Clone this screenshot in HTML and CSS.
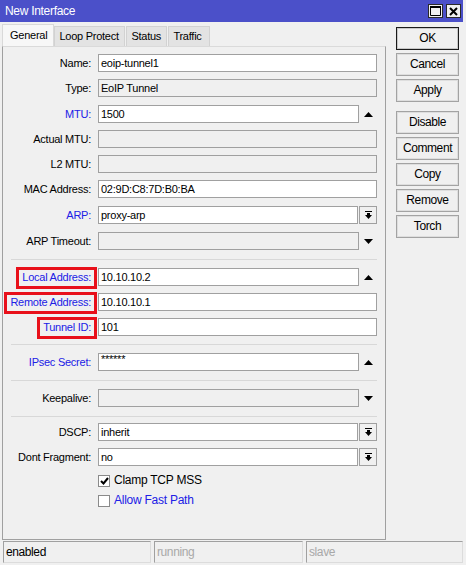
FILE: index.html
```
<!DOCTYPE html>
<html>
<head>
<meta charset="utf-8">
<link rel="stylesheet" href="styles.css">
</head>
<body>
<div class="window">
  <div class="titlebar">
    <span class="title">New Interface</span>
    <div class="tb-btns">
      <span class="tb-btn"><svg width="11" height="10" viewBox="0 0 11 10"><path d="M0.5 0.5h10v9h-10z M0.5 1.5h10" fill="none" stroke="#000" stroke-width="1"/><rect x="0" y="0" width="11" height="2" fill="#000"/></svg></span>
      <span class="tb-btn"><svg width="9" height="9" viewBox="0 0 9 9"><path d="M1 1L8 8M8 1L1 8" stroke="#000" stroke-width="2"/></svg></span>
    </div>
  </div>
  <div class="main">
    <div class="left">
      <div class="tabs">
        <span class="tab active">General</span>
        <span class="tab">Loop Protect</span>
        <span class="tab">Status</span>
        <span class="tab">Traffic</span>
      </div>
      <div class="panel">
        <div class="row"><span class="label">Name:</span><div class="field"><span class="input">eoip-tunnel1</span></div></div>
        <div class="row tall"><span class="label">Type:</span><div class="field"><span class="input dis">EoIP Tunnel</span></div></div>
        <div class="row"><span class="label blue">MTU:</span><div class="field"><span class="input">1500</span><span class="spin"><svg width="9" height="5" viewBox="0 0 9 5"><path d="M0 5h9L4.5 0z" fill="#000"/></svg></span></div></div>
        <div class="row"><span class="label">Actual MTU:</span><div class="field"><span class="input dis"></span></div></div>
        <div class="row"><span class="label">L2 MTU:</span><div class="field"><span class="input dis"></span></div></div>
        <div class="row tall"><span class="label">MAC Address:</span><div class="field"><span class="input">02:9D:C8:7D:B0:BA</span></div></div>
        <div class="row tall"><span class="label blue">ARP:</span><div class="field"><span class="input">proxy-arp</span><span class="drop"><svg width="9" height="9" viewBox="0 0 9 9"><rect x="1" y="0" width="7" height="1" fill="#000"/><rect x="3" y="2" width="3" height="3" fill="#000"/><path d="M1 4h7L4.5 8z" fill="#000"/></svg></span></div></div>
        <div class="row"><span class="label">ARP Timeout:</span><div class="field"><span class="input dis"></span><span class="spin"><svg width="9" height="5" viewBox="0 0 9 5"><path d="M0 0h9L4.5 5z" fill="#000"/></svg></span></div></div>
        <div class="sep"></div>
        <div class="row"><span class="label blue"><span class="hl">Local Address:</span></span><div class="field"><span class="input">10.10.10.2</span><span class="spin"><svg width="9" height="5" viewBox="0 0 9 5"><path d="M0 5h9L4.5 0z" fill="#000"/></svg></span></div></div>
        <div class="row"><span class="label blue"><span class="hl">Remote Address:</span></span><div class="field"><span class="input">10.10.10.1</span></div></div>
        <div class="row short"><span class="label blue"><span class="hl">Tunnel ID:</span></span><div class="field"><span class="input">101</span></div></div>
        <div class="sep"></div>
        <div class="row"><span class="label blue">IPsec Secret:</span><div class="field"><span class="input secret">******</span><span class="spin"><svg width="9" height="5" viewBox="0 0 9 5"><path d="M0 5h9L4.5 0z" fill="#000"/></svg></span></div></div>
        <div class="sep"></div>
        <div class="row"><span class="label">Keepalive:</span><div class="field"><span class="input dis"></span><span class="spin"><svg width="9" height="5" viewBox="0 0 9 5"><path d="M0 0h9L4.5 5z" fill="#000"/></svg></span></div></div>
        <div class="sep last"></div>
        <div class="row"><span class="label">DSCP:</span><div class="field"><span class="input">inherit</span><span class="drop"><svg width="9" height="9" viewBox="0 0 9 9"><rect x="1" y="0" width="7" height="1" fill="#000"/><rect x="3" y="2" width="3" height="3" fill="#000"/><path d="M1 4h7L4.5 8z" fill="#000"/></svg></span></div></div>
        <div class="row"><span class="label">Dont Fragment:</span><div class="field"><span class="input">no</span><span class="drop"><svg width="9" height="9" viewBox="0 0 9 9"><rect x="1" y="0" width="7" height="1" fill="#000"/><rect x="3" y="2" width="3" height="3" fill="#000"/><path d="M1 4h7L4.5 8z" fill="#000"/></svg></span></div></div>
        <div class="cbrow"><span class="cb"><svg width="9" height="8" viewBox="0 0 9 8"><path d="M1 4l2.5 2.5L8 1" fill="none" stroke="#000" stroke-width="2"/></svg></span><span class="cbtext">Clamp TCP MSS</span></div>
        <div class="cbrow"><span class="cb"></span><span class="cbtext blue">Allow Fast Path</span></div>
      </div>
    </div>
    <div class="buttons">
      <span class="btn default">OK</span>
      <span class="btn">Cancel</span>
      <span class="btn">Apply</span>
      <span class="btn group">Disable</span>
      <span class="btn">Comment</span>
      <span class="btn">Copy</span>
      <span class="btn">Remove</span>
      <span class="btn">Torch</span>
    </div>
  </div>
  <div class="statusbar">
    <span class="sfield s1">enabled</span>
    <span class="sfield s2 gray">running</span>
    <span class="sfield s3 gray">slave</span>
  </div>
</div>
</body>
</html>
```
FILE: styles.css
```
* { box-sizing: border-box; }
html, body { margin: 0; padding: 0; }
body {
  width: 466px;
  height: 565px;
  background: #f0f0f0;
  font-family: "Liberation Sans", Arial, sans-serif;
  font-size: 11px;
  letter-spacing: -0.25px;
  color: #000;
  overflow: hidden;
}
.window {
  width: 466px;
  height: 565px;
  display: flex;
  flex-direction: column;
}
.titlebar {
  height: 22px;
  margin-right: 3px;
  background: #4b50c9;
  display: flex;
  align-items: center;
  justify-content: space-between;
  padding-left: 5px;
  padding-right: 2px;
}
.title {
  color: #fff;
  font-size: 12px;
  letter-spacing: -0.3px;
}
.tb-btns { display: flex; gap: 3px; }
.tb-btn {
  width: 15px;
  height: 14px;
  background: #f0f0f0;
  border: 1px solid #2a2a2a;
  display: flex;
  align-items: center;
  justify-content: center;
}
.main {
  height: 519px;
  display: flex;
}
.left {
  width: 386px;
  padding-left: 2px;
  padding-top: 2px;
  display: flex;
  flex-direction: column;
}
.tabs {
  height: 22px;
  display: flex;
  align-items: flex-end;
}
.tab {
  height: 20px;
  padding: 0 4px;
  background: #e3e3e3;
  border: 1px solid #d2d2d2;
  border-bottom: none;
  line-height: 19px;
  margin-left: 1px;
}
.tab.active {
  height: 22px;
  background: #f7f7f7;
  border-color: #d9d9d9;
  padding: 0 6px 0 7px;
  margin-left: 0;
  line-height: 21px;
}
.tab:nth-child(2) { width: 71px; margin-left: 0; }
.tab:nth-child(3) { width: 41px; }
.tab:nth-child(4) { width: 42px; }
.panel {
  width: 384px;
  height: 494px;
  border: 1px solid #a0a0a0;
  border-top-color: #dadada;
  padding-top: 7px;
  display: flex;
  flex-direction: column;
}
.row {
  display: flex;
  height: 18px;
  margin-bottom: 7px;
  align-items: center;
}
.row.tall { margin-bottom: 8px; }
.row.short { margin-bottom: 6px; }
.label {
  width: 88px;
  margin-right: 7px;
  text-align: right;
  line-height: 18px;
  white-space: nowrap;
}
.blue { color: #2020e6; }
.hl {
  position: relative;
  display: inline-block;
}
.hl::after {
  content: "";
  position: absolute;
  left: -6px;
  right: -6px;
  top: -1px;
  bottom: -3px;
  border: 3px solid #e8101a;
}
.field {
  width: 279px;
  height: 18px;
  display: flex;
}
.input {
  flex: 1;
  height: 18px;
  background: #fff;
  border: 1px solid #a0a0a0;
  padding-left: 2px;
  line-height: 16px;
  white-space: nowrap;
  overflow: hidden;
}
.input.dis { background: #f0f0f0; }
.input.secret { line-height: 10px; }
.spin {
  width: 18px;
  display: flex;
  align-items: center;
  justify-content: center;
}
.drop {
  width: 18px;
  height: 18px;
  margin-left: 1px;
  border: 1px solid #a0a0a0;
  background: #f0f0f0;
  display: flex;
  align-items: center;
  justify-content: center;
}
.sep {
  height: 1px;
  background: #d8d8d8;
  margin: 2px 8px 8px 8px;
}
.sep.last { margin-bottom: 6px; }
.cbrow {
  display: flex;
  align-items: center;
  height: 13px;
  margin-bottom: 7px;
  padding-left: 95px;
}
.row + .cbrow { margin-top: 1px; }
.cb {
  width: 12px;
  height: 12px;
  border: 1px solid #8a8a8a;
  background: #fff;
  display: flex;
  align-items: center;
  justify-content: center;
  margin-right: 4px;
}
.cbtext { font-size: 12px; line-height: 13px; }
.buttons {
  margin-left: 10px;
  padding-top: 5px;
  width: 63px;
  display: flex;
  flex-direction: column;
  gap: 3px;
}
.btn {
  height: 23px;
  border: 1px solid #a3a3a3;
  box-shadow: inset 0 0 0 1px #dedede;
  background: #f0f0f0;
  text-align: center;
  line-height: 21px;
  font-size: 12px;
  letter-spacing: -0.4px;
}
.btn.default { border-color: #1a1a1a; box-shadow: inset 0 0 0 1px #c8c8c8; }
.btn.group { margin-top: 6px; }
.statusbar {
  height: 22px;
  display: flex;
  gap: 3px;
  padding: 0 3px;
}
.sfield {
  height: 22px;
  border: 1px solid #a0a0a0;
  border-right-color: #dcdcdc;
  border-bottom-color: #dcdcdc;
  padding-left: 2px;
  line-height: 20px;
  font-size: 12px;
  letter-spacing: -0.4px;
}
.s1 { width: 148px; }
.s2 { width: 149px; }
.s3 { flex: 1; }
.gray { color: #a8a8a8; }
```
